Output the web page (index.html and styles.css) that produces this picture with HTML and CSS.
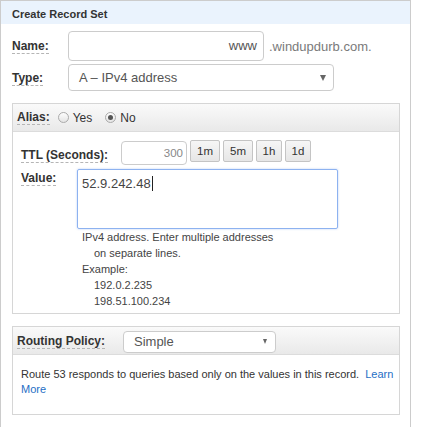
FILE: index.html
```html
<!DOCTYPE html>
<html>
<head>
<meta charset="utf-8">
<link rel="stylesheet" href="styles.css">
</head>
<body>
<div class="panel">
  <div class="panel-head">Create Record Set</div>
  <div class="panel-body">
    <div class="row row-name">
      <label class="lbl"><span class="tip">Name:</span></label>
      <div class="input name-input">www</div>
      <span class="suffix">.windupdurb.com.</span>
    </div>
    <div class="row row-type">
      <label class="lbl"><span class="tip">Type:</span></label>
      <div class="select type-select"><span>A – IPv4 address</span><span class="caret"></span></div>
    </div>

    <div class="sub">
      <div class="sub-head alias-head">
        <span class="tip">Alias:</span>
        <span class="radio"></span><span class="radio-label">Yes</span>
        <span class="radio checked"></span><span class="radio-label">No</span>
      </div>
      <div class="sub-body value-body">
        <div class="ttl-row">
          <label class="lbl2"><span class="tip">TTL (Seconds):</span></label>
          <div class="input ttl-input">300</div>
          <div class="btns">
            <button class="btn b-wide">1m</button>
            <button class="btn b-wide">5m</button>
            <button class="btn">1h</button>
            <button class="btn">1d</button>
          </div>
        </div>
        <div class="value-row">
          <label class="lbl3"><span class="tip">Value:</span></label>
          <div class="value-col">
            <div class="textarea">52.9.242.48<span class="cursor"></span></div>
            <div class="help">
              <div>IPv4 address. Enter multiple addresses</div>
              <div class="ind">on separate lines.</div>
              <div>Example:</div>
              <div class="ind">192.0.2.235</div>
              <div class="ind">198.51.100.234</div>
            </div>
          </div>
        </div>
      </div>
    </div>

    <div class="sub routing">
      <div class="sub-head routing-head">
        <span class="tip routing-lbl">Routing Policy:</span>
        <div class="select routing-select"><span>Simple</span><span class="caret small"></span></div>
      </div>
      <div class="routing-body">
        Route 53 responds to queries based only on the values in this record. <a class="link" href="#">Learn More</a>
      </div>
    </div>
  </div>
</div>
</body>
</html>
```

FILE: styles.css
```css
html, body {
  margin: 0;
  padding: 0;
  background: #fff;
}
body {
  font-family: "Liberation Sans", Arial, sans-serif;
  color: #333;
}
.panel {
  width: 411px;
  box-sizing: border-box;
  border: 1px solid #ccc;
  border-bottom: none;
  padding-bottom: 40px;
}
.panel-head {
  height: 23px;
  box-sizing: border-box;
  background: #eaf3fd;
  padding: 7px 11px 0;
  font-size: 11px;
  line-height: 12px;
  font-weight: bold;
  color: #333;
}
.panel-body {
  padding: 7px 10px 0 11px;
}
.row {
  display: flex;
  align-items: center;
}
.lbl {
  width: 56px;
  flex: none;
  font-size: 12px;
  line-height: 14px;
  font-weight: bold;
  color: #333;
}
.tip {
  border-bottom: 1px dashed #b5b5b5;
  font-size: 12px;
  line-height: 14px;
  font-weight: bold;
  color: #333;
}
.input {
  box-sizing: border-box;
  border: 1px solid #ccc;
  border-radius: 4px;
  background: #fff;
  color: #555;
}
.name-input {
  width: 196px;
  height: 30px;
  font-size: 13px;
  line-height: 28px;
  text-align: right;
  padding-right: 6px;
}
.suffix {
  margin-left: 5px;
  font-size: 13px;
  color: #7a7a7a;
}
.row-type {
  margin-top: 3px;
}
.select {
  box-sizing: border-box;
  border: 1px solid #ccc;
  border-radius: 4px;
  background: #fff;
  color: #555;
  display: flex;
  align-items: center;
  justify-content: space-between;
  font-size: 13px;
}
.type-select {
  width: 266px;
  height: 27px;
  padding: 0 7px 0 10px;
}
.caret {
  width: 0;
  height: 0;
  border-left: 3px solid transparent;
  border-right: 3px solid transparent;
  border-top: 6px solid #666;
}
.caret.small {
  border-left-width: 2.5px;
  border-right-width: 2.5px;
  border-top-width: 5px;
}
.sub {
  margin-top: 12px;
  border: 1px solid #d6d6d6;
}
.sub-head {
  height: 28px;
  box-sizing: border-box;
  border-bottom: 1px solid #dcdcdc;
  background: linear-gradient(#fafafa, #e9e9e9);
  display: flex;
  align-items: center;
  padding-left: 4px;
}
.radio {
  width: 11px;
  height: 11px;
  box-sizing: border-box;
  border: 1px solid #aaa;
  border-radius: 50%;
  background: linear-gradient(#fdfdfd, #e4e4e4);
  position: relative;
  margin-left: 8px;
}
.radio.checked::after {
  content: "";
  position: absolute;
  left: 2px;
  top: 2px;
  width: 5px;
  height: 5px;
  border-radius: 50%;
  background: #555;
}
.radio-label {
  font-size: 12px;
  color: #333;
  margin-left: 4px;
}
.radio-label + .radio {
  margin-left: 13px;
}
.sub-body {
  padding: 8px 8px 4px;
}
.ttl-row {
  display: flex;
  align-items: flex-start;
}
.lbl2 {
  width: 100px;
  flex: none;
  padding-top: 7px;
  line-height: 14px;
}
.ttl-input {
  width: 66px;
  height: 24px;
  margin-top: 1px;
  font-size: 11.5px;
  line-height: 22px;
  text-align: right;
  padding-right: 3px;
  color: #888;
}
.btns {
  display: flex;
  gap: 3px;
  margin-left: 3px;
}
.btn {
  box-sizing: border-box;
  height: 22px;
  width: 26px;
  padding: 0;
  border: 1px solid #c4c4c4;
  border-radius: 2px;
  background: linear-gradient(#f6f6f6, #e6e6e6);
  font-family: "Liberation Sans", Arial, sans-serif;
  font-size: 11.5px;
  color: #333;
  line-height: 20px;
}
.btn.b-wide {
  width: 30px;
}
.value-row {
  display: flex;
  align-items: flex-start;
  margin-top: 4px;
}
.lbl3 {
  width: 56px;
  flex: none;
  padding-top: 1px;
  line-height: 14px;
}
.textarea {
  width: 261px;
  height: 60px;
  box-sizing: border-box;
  border: 1px solid #8db2f0;
  border-radius: 2px;
  box-shadow: 0 0 2px rgba(100, 150, 240, 0.5);
  padding: 6px 4px;
  font-size: 13px;
  line-height: 15px;
  color: #444;
}
.cursor {
  display: inline-block;
  width: 1px;
  height: 15px;
  background: #222;
  vertical-align: -3px;
  margin-left: 1px;
}
.help {
  padding-left: 5px;
  font-size: 11px;
  line-height: 16px;
  color: #444;
}
.help .ind {
  padding-left: 12px;
}
.routing-head {
  padding-top: 2px;
}
.routing-lbl {
  margin-right: 18px;
}
.routing-select {
  width: 153px;
  height: 22px;
  padding: 0 8px 0 10px;
}
.routing-body {
  padding: 12px 3px 17px 8px;
  font-size: 11px;
  line-height: 15px;
  color: #333;
}
.link {
  color: #1f6fc5;
  text-decoration: none;
  margin-left: 3px;
}
```
